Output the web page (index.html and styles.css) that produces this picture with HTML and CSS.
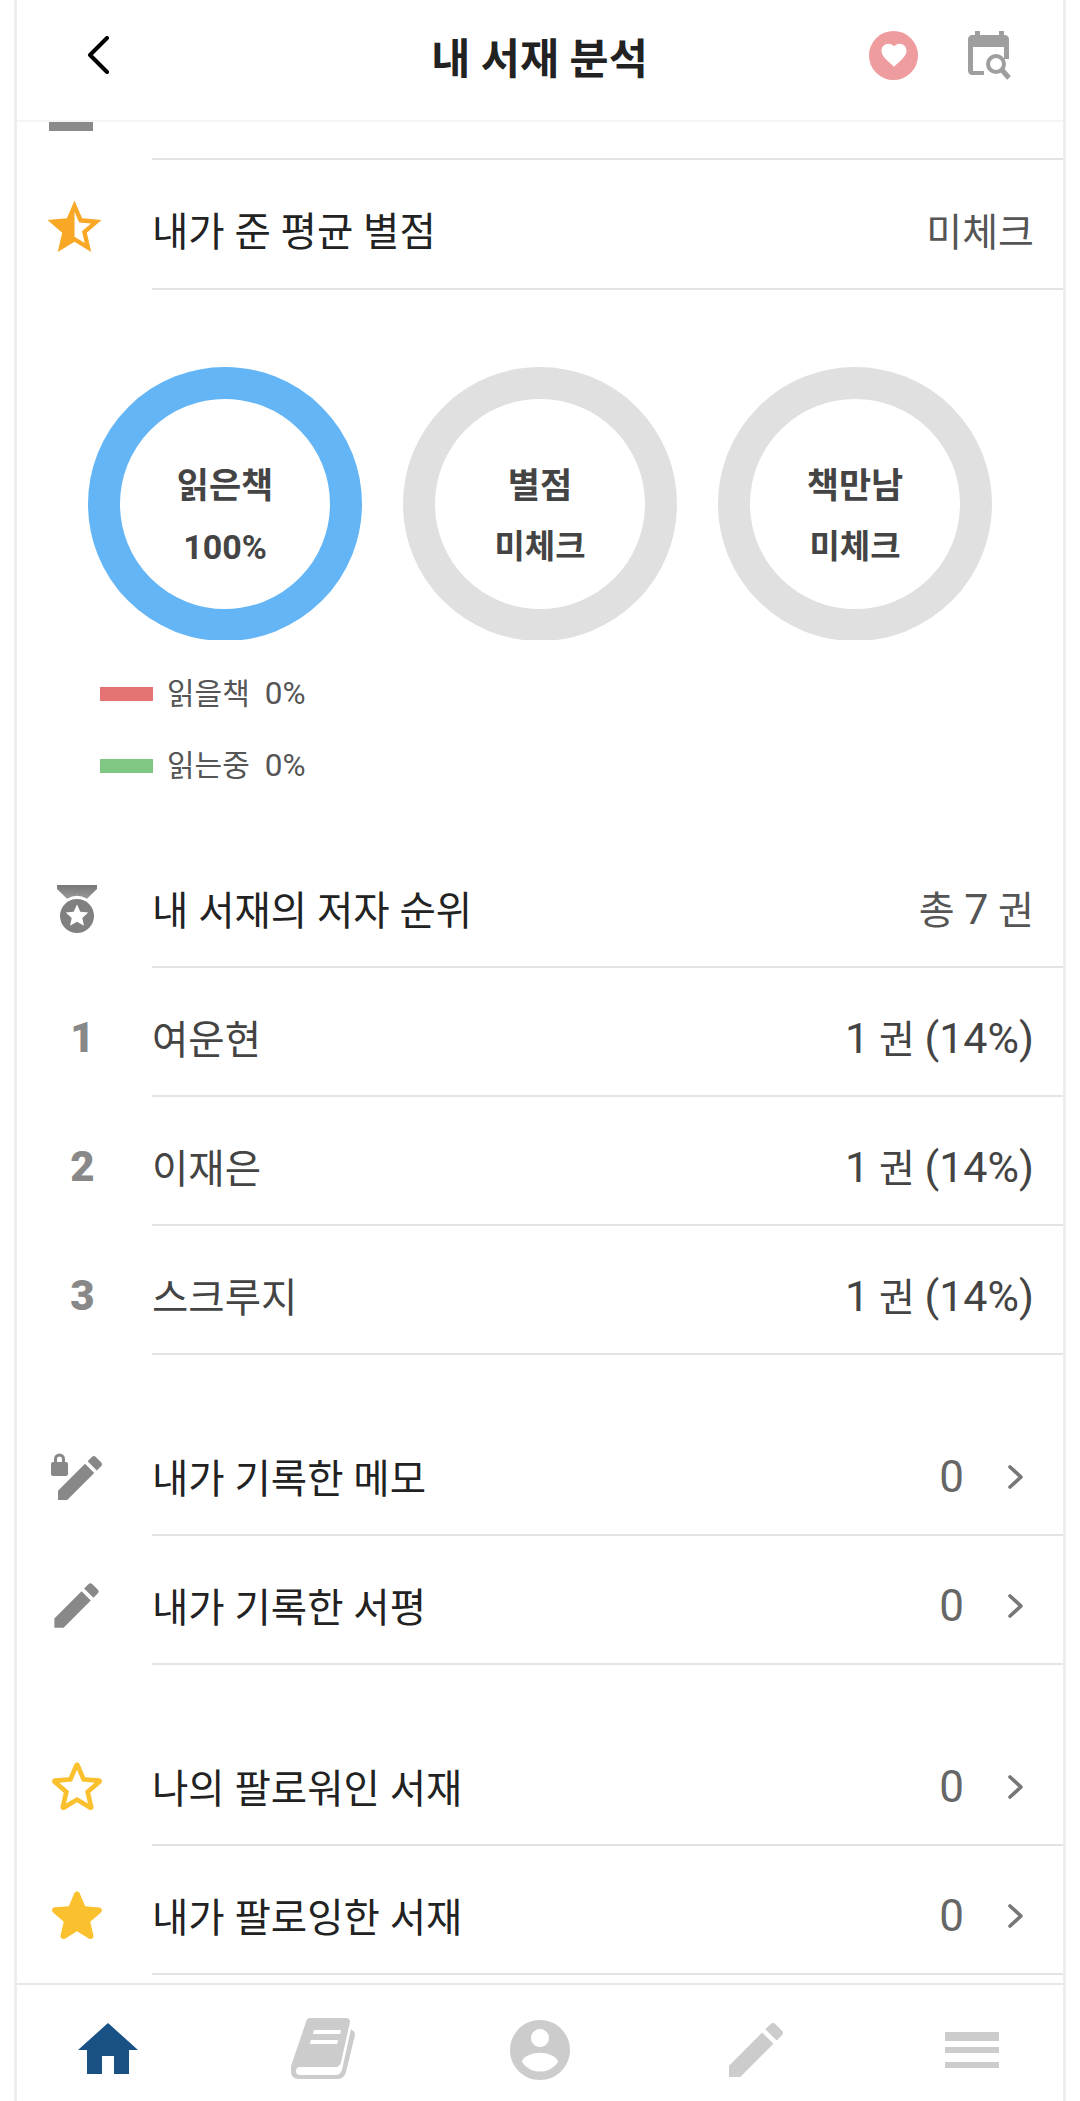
FILE: index.html
```html
<!DOCTYPE html>
<html lang="ko">

<head>
    <meta charset="UTF-8">
    <title>내 서재 분석</title>
    <link rel="stylesheet" href="styles.css">
</head>

<body>
    <div class="app">
        <header class="topbar">
            <svg class="back" viewBox="0 0 22 38"><path d="M20 2 3 19l17 17" /></svg>
            <h1 class="title">내 서재 분석</h1>
            <div class="actions">
                <span class="like">
                    <svg viewBox="0 0 24 24"><path d="M12 21.35l-1.45-1.32C5.4 15.36 2 12.28 2 8.5 2 5.42 4.42 3 7.5 3c1.74 0 3.41.81 4.5 2.09C13.09 3.81 14.76 3 16.5 3 19.58 3 22 5.42 22 8.5c0 3.78-3.4 6.86-8.55 11.54L12 21.35z" /></svg>
                </span>
                <svg class="calendar" viewBox="0 0 43 49">
                    <path d="M7 0h5v4h19V0h5v4h1c2 0 4 2 4 4v20h-5V16H5v24h11v4H4c-2 0-4-2-4-4V8c0-2 2-4 4-4h3z" />
                    <circle cx="28" cy="33" r="8" />
                    <path class="handle" d="M34 39l7 8" />
                </svg>
            </div>
        </header>

        <main class="content">
            <div class="row row-clipped">
                <span class="icon"><span class="cut-icon"></span></span>
                <div class="line">
                    <span class="label">내가 읽은 양 평균</span>
                    <span class="value">0 / 0 권</span>
                </div>
            </div>
            <div class="row row-tall">
                <span class="icon">
                    <svg class="ic-star-half" viewBox="0 0 24 24"><path d="M22 9.24l-7.19-.62L12 2 9.19 8.63 2 9.24l5.46 4.73L5.82 21 12 17.27 18.18 21l-1.63-7.03L22 9.24zM12 15.4V6.1l1.71 4.04 4.38.38-3.32 2.88 1 4.28L12 15.4z" /></svg>
                </span>
                <div class="line">
                    <span class="label">내가 준 평균 별점</span>
                    <span class="value">미체크</span>
                </div>
            </div>

            <section class="charts">
                <div class="rings">
                    <div class="ring-box">
                        <div class="ring ring-on">
                            <strong>읽은책</strong>
                            <strong class="num">100%</strong>
                        </div>
                    </div>
                    <div class="ring-box">
                        <div class="ring">
                            <strong>별점</strong>
                            <strong class="small">미체크</strong>
                        </div>
                    </div>
                    <div class="ring-box">
                        <div class="ring">
                            <strong>책만남</strong>
                            <strong class="small">미체크</strong>
                        </div>
                    </div>
                </div>
                <ul class="legend">
                    <li><span class="swatch red"></span><span class="legend-text">읽을책&nbsp; <span class="pct">0%</span></span></li>
                    <li><span class="swatch green"></span><span class="legend-text">읽는중&nbsp; <span class="pct">0%</span></span></li>
                </ul>
            </section>

            <div class="row">
                <span class="icon">
                    <svg class="ic-medal" viewBox="0 0 40 48">
                        <defs>
                            <linearGradient id="ribbon" x1="0" y1="0" x2="0" y2="1">
                                <stop offset="0" stop-color="#777" />
                                <stop offset="1" stop-color="#999" />
                            </linearGradient>
                        </defs>
                        <path fill="url(#ribbon)" d="M0 0h40v4L30 13.7A20 20 0 0 0 10 13.7L0 4z" />
                        <circle cx="20" cy="31" r="17" fill="#808080" />
                        <path fill="#fff" d="M20 19.5l3.3 7.3 7.9.8-5.9 5.3 1.7 7.8-7-4-7 4 1.7-7.8-5.9-5.3 7.9-.8z" />
                    </svg>
                </span>
                <div class="line">
                    <span class="label">내 서재의 저자 순위</span>
                    <span class="value">총 <span class="num">7</span> 권</span>
                </div>
            </div>
            <div class="row">
                <span class="icon rank">1</span>
                <div class="line">
                    <span class="label name">여운현</span>
                    <span class="value dark"><span class="num">1</span> 권 <span class="num">(14%)</span></span>
                </div>
            </div>
            <div class="row">
                <span class="icon rank">2</span>
                <div class="line">
                    <span class="label name">이재은</span>
                    <span class="value dark"><span class="num">1</span> 권 <span class="num">(14%)</span></span>
                </div>
            </div>
            <div class="row">
                <span class="icon rank">3</span>
                <div class="line">
                    <span class="label name">스크루지</span>
                    <span class="value dark"><span class="num">1</span> 권 <span class="num">(14%)</span></span>
                </div>
            </div>

            <div class="group">
                <div class="row">
                    <span class="icon">
                        <svg class="ic-lockpen" viewBox="0 0 52 46">
                            <rect x="0" y="8" width="17" height="14" rx="2" />
                            <path class="shackle" d="M4.5 9V5a4 4 0 0 1 8 0v4" />
                            <path transform="translate(-.33 -5.3) scale(2.444)" d="M3 17.25V21h3.75L17.81 9.94l-3.75-3.75L3 17.25zM20.71 7.04c.39-.39.39-1.02 0-1.41l-2.34-2.34c-.39-.39-1.02-.39-1.41 0l-1.83 1.83 3.75 3.75 1.83-1.83z" />
                        </svg>
                    </span>
                    <div class="line">
                        <span class="label">내가 기록한 메모</span>
                        <span class="count">0</span>
                        <svg class="more" viewBox="0 0 18 26"><path d="M3 3l11 10L3 23" /></svg>
                    </div>
                </div>
                <div class="row">
                    <span class="icon">
                        <svg class="ic-pen" viewBox="0 0 24 24"><path d="M3 17.25V21h3.75L17.81 9.94l-3.75-3.75L3 17.25zM20.71 7.04c.39-.39.39-1.02 0-1.41l-2.34-2.34c-.39-.39-1.02-.39-1.41 0l-1.83 1.83 3.75 3.75 1.83-1.83z" /></svg>
                    </span>
                    <div class="line">
                        <span class="label">내가 기록한 서평</span>
                        <span class="count">0</span>
                        <svg class="more" viewBox="0 0 18 26"><path d="M3 3l11 10L3 23" /></svg>
                    </div>
                </div>
            </div>

            <div class="group">
                <div class="row">
                    <span class="icon">
                        <svg class="ic-star" viewBox="0 0 24 24"><path d="M19.65 9.04l-4.84-.42-1.89-4.45c-.34-.81-1.5-.81-1.84 0L9.19 8.63l-4.83.41c-.88.07-1.24 1.17-.57 1.75l3.67 3.18-1.1 4.72c-.2.86.73 1.54 1.49 1.08l4.15-2.5 4.15 2.51c.76.46 1.69-.22 1.49-1.08l-1.1-4.73 3.67-3.18c.67-.58.32-1.68-.56-1.75zM12 15.4l-3.76 2.27 1-4.28-3.32-2.88 4.38-.38L12 6.1l1.71 4.04 4.38.38-3.32 2.88 1 4.28L12 15.4z" /></svg>
                    </span>
                    <div class="line">
                        <span class="label">나의 팔로워인 서재</span>
                        <span class="count">0</span>
                        <svg class="more" viewBox="0 0 18 26"><path d="M3 3l11 10L3 23" /></svg>
                    </div>
                </div>
                <div class="row">
                    <span class="icon">
                        <svg class="ic-star" viewBox="0 0 24 24"><path d="M12 17.27l4.15 2.51c.76.46 1.69-.22 1.49-1.08l-1.1-4.72 3.67-3.18c.67-.58.31-1.68-.57-1.75l-4.83-.41-1.89-4.46c-.34-.81-1.5-.81-1.84 0L9.19 8.63l-4.83.41c-.88.07-1.24 1.17-.57 1.75l3.67 3.18-1.1 4.72c-.2.86.73 1.54 1.49 1.08l4.15-2.5z" /></svg>
                    </span>
                    <div class="line">
                        <span class="label">내가 팔로잉한 서재</span>
                        <span class="count">0</span>
                        <svg class="more" viewBox="0 0 18 26"><path d="M3 3l11 10L3 23" /></svg>
                    </div>
                </div>
            </div>
        </main>

        <nav class="tabbar">
            <a class="tab active">
                <svg viewBox="0 0 24 24"><path d="M10 20v-6h4v6h5v-8h3L12 3 2 12h3v8z" /></svg>
            </a>
            <a class="tab">
                <svg class="book" viewBox="0 0 90 80">
                    <path fill-rule="evenodd" d="M31 8H67q4 0 4 4L62 52q-1 4-4 5H21q-4 0-4 4t4 4H57q4 0 6-5L72 19l1 1q3 1 3 5L67 62q-2 7-8 7H20q-8 0-8-8V56L27 12q1-4 4-4zM36 20H61q1 0 1 1l-.5 2q0 1-1 1H35q-1 0-1-1l.5-2q0-1 1.500-1zM33 30H58q1 0 1 1l-.5 2q0 1-1 1H32q-1 0-1-1l.5-2q0-1 1.500-1z" />
                </svg>
            </a>
            <a class="tab">
                <svg viewBox="0 0 24 24"><path d="M12 2C6.48 2 2 6.48 2 12s4.48 10 10 10 10-4.48 10-10S17.52 2 12 2zm0 3c1.66 0 3 1.34 3 3s-1.34 3-3 3-3-1.34-3-3 1.34-3 3-3zm0 14.2c-2.5 0-4.71-1.28-6-3.22.03-1.99 4-3.08 6-3.08 1.99 0 5.97 1.09 6 3.08-1.29 1.94-3.5 3.22-6 3.22z" /></svg>
            </a>
            <a class="tab">
                <svg viewBox="0 0 24 24"><path d="M3 17.25V21h3.75L17.81 9.94l-3.75-3.75L3 17.25zM20.71 7.04c.39-.39.39-1.02 0-1.41l-2.34-2.34c-.39-.39-1.02-.39-1.41 0l-1.83 1.83 3.75 3.75 1.83-1.83z" /></svg>
            </a>
            <a class="tab">
                <svg viewBox="0 0 24 24"><path d="M3 18h18v-2H3v2zm0-5h18v-2H3v2zm0-6v2h18V6H3z" /></svg>
            </a>
        </nav>
    </div>
</body>

</html>
```

FILE: styles.css
```css
* {
    padding: 0;
    margin: 0;
    box-sizing: border-box;
}

html,
body {
    height: 100%;
    background: #fff;
}

body {
    font-family: "Roboto", "Noto Sans CJK KR", sans-serif;
    color: #222;
    overflow: hidden;
}

.app {
    height: 100%;
    margin: 0 14px;
    display: flex;
    flex-direction: column;
    border-left: #eee solid 3px;
    border-right: #eee solid 3px;
}

/* top bar */
.topbar {
    height: 122px;
    flex: none;
    display: grid;
    grid-template-columns: 1fr auto 1fr;
    align-items: center;
    padding: 0 52px 10px 70px;
    border-bottom: #f5f5f5 solid 2px;
}

.back {
    width: 22px;
    height: 38px;
    fill: none;
    stroke: #000;
    stroke-width: 4;
    stroke-linecap: round;
    stroke-linejoin: round;
}

.title {
    margin-right: 19px;
    font-size: 42.5px;
    font-weight: 700;
    color: #222;
}

.actions {
    display: flex;
    justify-content: flex-end;
    align-items: center;
    gap: 50px;
}

.like {
    width: 49px;
    height: 49px;
    border-radius: 50%;
    background: #ee9c9e;
    display: flex;
    align-items: center;
    justify-content: center;
}

.like svg {
    width: 30px;
    height: 30px;
    fill: #fff;
}

.calendar {
    width: 43px;
    height: 49px;
    fill: #9e9e9e;
}

.calendar circle,
.calendar .handle {
    fill: none;
    stroke: #9e9e9e;
    stroke-width: 4;
}

.calendar .handle {
    stroke-width: 5;
}

/* scroll area */
.content {
    flex: 1;
    min-height: 0;
    overflow: hidden;
}

.row {
    height: 129px;
    display: flex;
    align-items: stretch;
}

.row-tall {
    height: 130px;
}

.row-clipped {
    margin-top: -91px;
}

.icon {
    width: 135px;
    flex: none;
    display: flex;
    align-items: center;
    justify-content: center;
    padding: 10px 16px 0 0;
}

.cut-icon {
    width: 44px;
    height: 44px;
    margin: 17px 11px 0 0;
    background: #8a8a8a;
}

.line {
    flex: 1;
    display: flex;
    align-items: center;
    padding: 9px 29px 0 0;
    border-bottom: #e4e4e4 solid 2px;
}

.row-clipped .line {
    padding-top: 8px;
}

.label {
    flex: 1;
    font-size: 39.5px;
    color: #222;
}

.name {
    color: #444;
}

.value {
    font-size: 39px;
    color: #555;
}

.value .num {
    font-size: 43px;
}

.dark {
    color: #444;
}

.count {
    margin-top: 4px;
    font-size: 44px;
    color: #666;
}

.more {
    width: 18px;
    height: 26px;
    margin: 4px 9px 0 43px;
    fill: none;
    stroke: #777;
    stroke-width: 3.6;
    stroke-linecap: round;
    stroke-linejoin: round;
}

.rank {
    padding-left: 12px;
    font-size: 42px;
    font-weight: 900;
    color: #888;
}

.ic-star-half {
    width: 65px;
    height: 65px;
    margin: -6px 5px 0 0;
    fill: #f9a825;
}

.ic-medal {
    width: 40px;
    height: 48px;
}

.ic-lockpen {
    width: 52px;
    height: 46px;
    fill: #888;
    overflow: visible;
}

.shackle {
    fill: none;
    stroke: #888;
    stroke-width: 3;
}

.ic-pen {
    width: 59px;
    height: 59px;
    fill: #888;
}

.ic-star {
    width: 70px;
    height: 70px;
    fill: #fbc02d;
}

/* charts */
.charts {
    padding-top: 77px;
    height: 549px;
}

.rings {
    display: flex;
    gap: 41px;
    padding-left: 71px;
}

.ring-box {
    width: 274px;
    height: 273px;
    overflow: hidden;
}

.ring {
    width: 274px;
    height: 274px;
    padding-top: 26px;
    border-radius: 50%;
    border: #e0e0e0 solid 32px;
    display: flex;
    flex-direction: column;
    align-items: center;
    justify-content: center;
    gap: 18px;
    color: #444;
}

.ring-on {
    border-color: #64b5f6;
}

.ring strong {
    font-size: 35px;
    line-height: 42px;
}

.ring .small {
    font-size: 33px;
}

.ring .num {
    font-size: 34px;
}

.legend {
    list-style: none;
    padding: 18px 0 0 83px;
}

.legend li {
    height: 72px;
    display: flex;
    align-items: center;
    color: #555;
}

.legend-text {
    margin-top: -7px;
    font-size: 30px;
}

.pct {
    font-size: 31.5px;
}

.swatch {
    width: 53px;
    height: 14px;
    margin-right: 14px;
}

.red {
    background: #e57373;
}

.green {
    background: #81c784;
}

.group {
    margin-top: 52px;
}

/* bottom tabs */
.tabbar {
    height: 118px;
    flex: none;
    margin: 0 -17px;
    padding-top: 15px;
    display: grid;
    grid-template-columns: repeat(5, 1fr);
    position: relative;
}

.tabbar::before {
    content: "";
    position: absolute;
    left: 17px;
    right: 17px;
    top: 0;
    border-top: #e8e8e8 solid 2px;
}

.tab {
    display: flex;
    align-items: center;
    justify-content: center;
    fill: #ccc;
}

.tab svg {
    width: 72px;
    height: 72px;
}

.tab .book {
    width: 90px;
    height: 80px;
}

.active {
    fill: #1a5185;
}
```
